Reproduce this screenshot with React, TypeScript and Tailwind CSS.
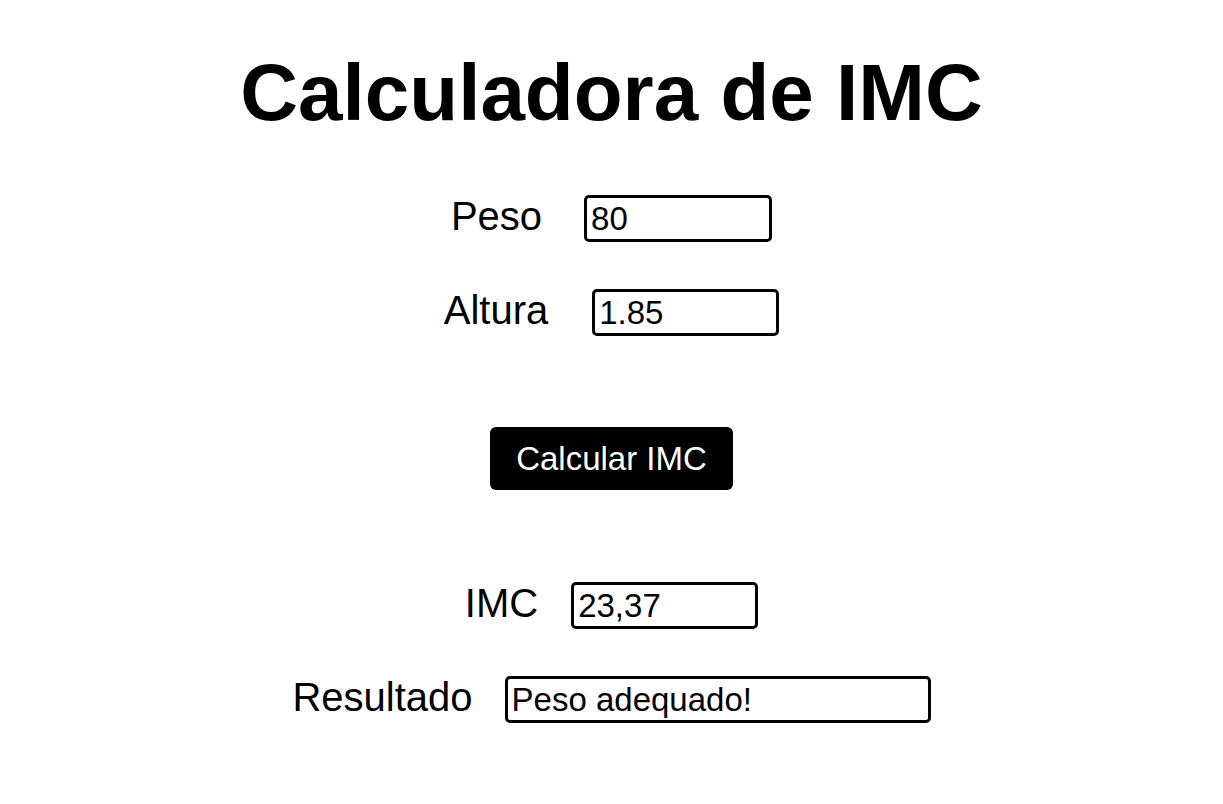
import { useState } from "react";

function Field({
  label,
  value,
  width,
  gap,
}: {
  label: string;
  value: string;
  width: string;
  gap: string;
}) {
  return (
    <div className={`flex items-baseline ${gap}`}>
      <label className="text-[40px] leading-none text-black">{label}</label>
      <input
        readOnly
        value={value}
        className={`${width} h-[47px] rounded-[5px] border-[3px] border-black bg-white px-1 py-0 text-[33px] leading-[37px] text-black outline-none`}
      />
    </div>
  );
}

export default function App() {
  const [peso] = useState("80");
  const [altura] = useState("1.85");

  return (
    <div className="min-h-screen bg-white font-['Liberation_Sans',Arial,sans-serif] text-black">
      <div className="flex flex-col items-center">
        <h1 className="mt-[47px] text-[80px] font-bold leading-[92px]">Calculadora de IMC</h1>

        <div className="mt-[56px] flex flex-col items-center gap-[47px]">
          <Field label="Peso" value={peso} width="w-[188px]" gap="gap-[42px]" />
          <Field label="Altura" value={altura} width="w-[187px]" gap="gap-[44px]" />
        </div>

        <button className="mt-[91px] h-[63px] rounded-[6px] bg-black px-[26px] text-[33px] leading-[38px] text-white">
          Calcular IMC
        </button>

        <div className="mt-[92px] flex flex-col items-center gap-[47px]">
          <Field label="IMC" value="23,37" width="w-[187px]" gap="gap-[33px]" />
          <Field label="Resultado" value="Peso adequado!" width="w-[426px]" gap="gap-[32px]" />
        </div>
      </div>
    </div>
  );
}
